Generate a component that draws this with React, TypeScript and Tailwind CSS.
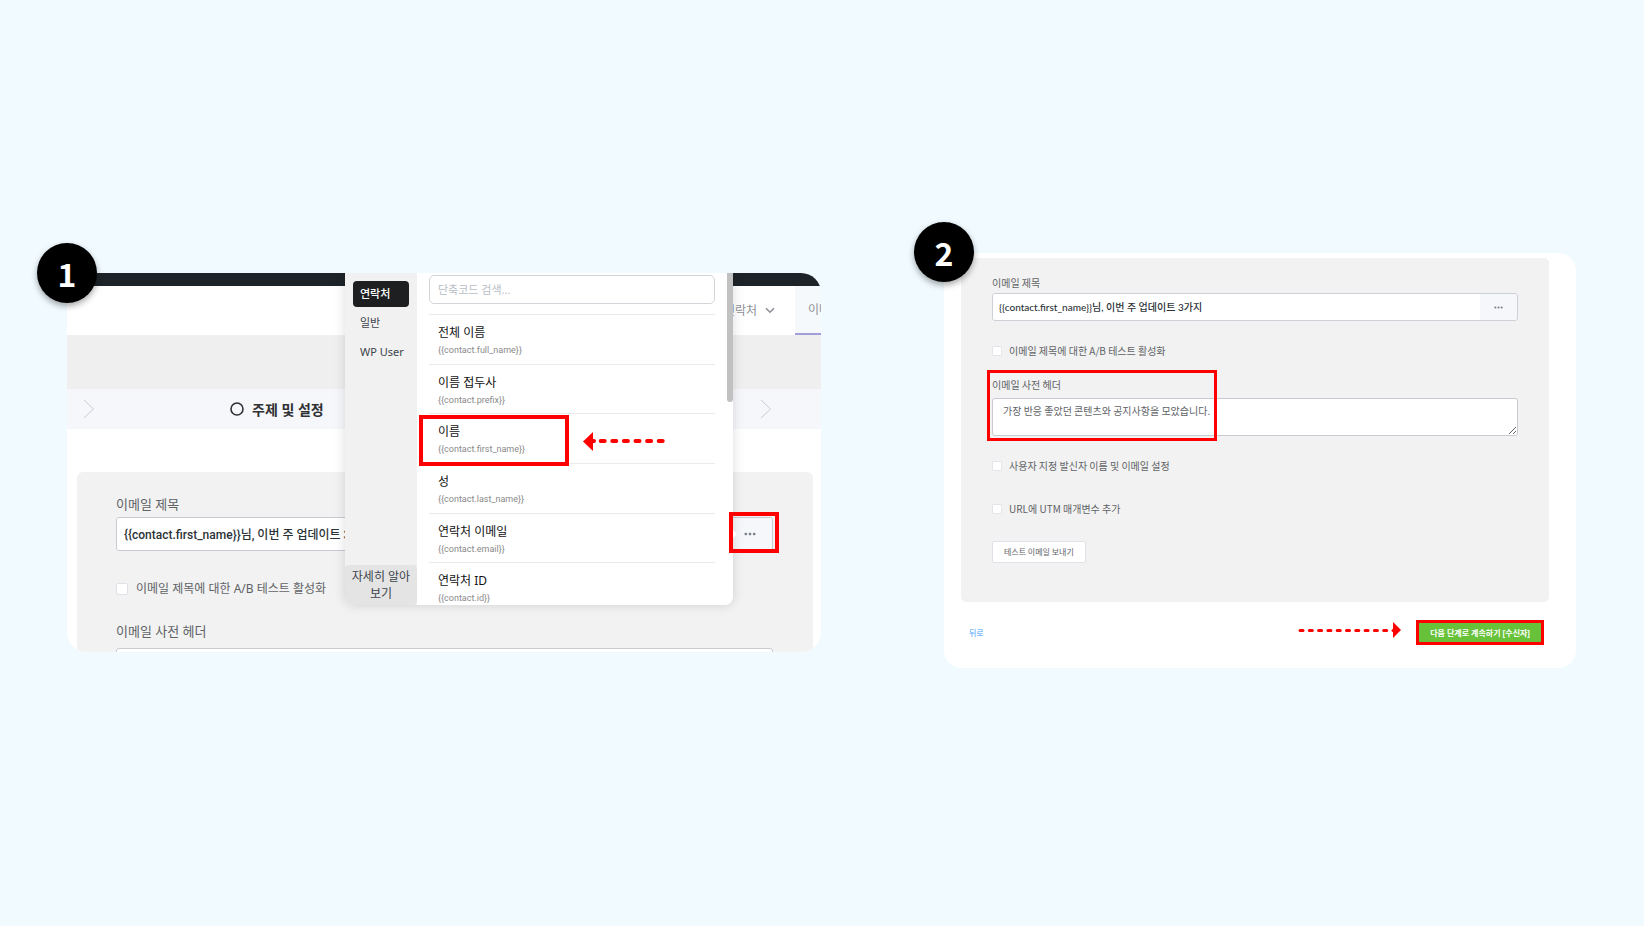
import { useState } from 'react'

const SUBJECT = '{{contact.first_name}}님, 이번 주 업데이트 3가지'

const shortcodes = [
  { title: '전체 이름', code: '{{contact.full_name}}' },
  { title: '이름 접두사', code: '{{contact.prefix}}' },
  { title: '이름', code: '{{contact.first_name}}' },
  { title: '성', code: '{{contact.last_name}}' },
  { title: '연락처 이메일', code: '{{contact.email}}' },
  { title: '연락처 ID', code: '{{contact.id}}' },
]

function StepBadge({ n, className }: { n: number; className: string }) {
  return (
    <div
      className={`absolute flex h-[60px] w-[60px] items-center justify-center rounded-full bg-black font-['Noto_Sans_CJK_KR',sans-serif] text-[32px] leading-none font-bold text-white shadow-[0_3px_6px_rgba(0,0,0,0.35)] ${className}`}
    >
      {n}
    </div>
  )
}

function StepArrow() {
  return (
    <svg width="12" height="20" viewBox="0 0 12 20" fill="none" stroke="#c8cbd2">
      <path d="M1 1l9.5 9L1 19" />
    </svg>
  )
}

function Dots({ className }: { className: string }) {
  return (
    <svg className={className} viewBox="0 0 12 4" fill="#7d8189">
      <rect x="0.5" y="0.7" width="2.6" height="2.6" rx="1" />
      <rect x="4.7" y="0.7" width="2.6" height="2.6" rx="1" />
      <rect x="8.9" y="0.7" width="2.6" height="2.6" rx="1" />
    </svg>
  )
}

function ShortcodePopover() {
  const [query, setQuery] = useState('')

  return (
    <div className="absolute top-0 left-[278px] h-[332px] w-[388px]">
      <div className="flex h-full overflow-hidden rounded-b-lg bg-white shadow-[0_0_12px_rgba(0,0,0,0.14)]">
        <div className="flex w-[72px] flex-col justify-between bg-[#f1f1f1] text-[#3c434a]">
          <div className="flex flex-col gap-[3px] px-2 pt-2 text-[11px]">
            <button className="h-[26px] rounded bg-[#1d1f21] pl-[7px] text-left font-medium text-white">연락처</button>
            <button className="h-[26px] pl-[7px] text-left">일반</button>
            <button className="h-[26px] pl-[7px] text-left whitespace-nowrap">WP User</button>
          </div>
          <button className="h-10 rounded bg-[#e4e4e4] px-1 text-center text-[12px] leading-[17px]">자세히 알아보기</button>
        </div>
        <div className="flex-1 pt-[2px] pr-[18px] pl-3">
          <input
            aria-label="단축코드 검색"
            placeholder="단축코드 검색..."
            value={query}
            onChange={e => setQuery(e.target.value)}
            className="mb-[10px] block h-[29px] w-full rounded-[5px] border border-[#d3d5da] px-2 text-[11px] placeholder:text-[#b9bdc5]"
          />
          <ul className="grid h-[298px] grid-rows-6">
            {shortcodes
              .filter(s => s.title.includes(query))
              .map(s => (
                <li key={s.code} className="border-t border-[#ebebeb] pt-[9px] pl-[9px]">
                  <div className="text-[12px] leading-[18px] text-[#111]">{s.title}</div>
                  <div className="font-['Roboto',sans-serif] text-[9px] leading-4 text-[#8a8a8a]">{s.code}</div>
                </li>
              ))}
          </ul>
        </div>
      </div>
      <div className="absolute top-0 right-0 h-[129px] w-[6px] rounded-b-[3px] bg-[#c1c1c1]" />
      <div className="absolute top-[257px] left-full border-y-4 border-l-4 border-y-transparent border-l-white" />
    </div>
  )
}

function SubjectCard() {
  const [subject, setSubject] = useState(SUBJECT)

  return (
    <section className="relative mt-5 h-[379px]">
      <div className="relative h-full overflow-hidden rounded-tr-[20px] rounded-b-[20px] bg-white">
        <div className="h-[13px] bg-[#1d2327]" />
        <nav className="flex h-[49px] justify-end text-[12px] text-[#8d9197]">
          <a href="#contacts" className="flex items-center gap-2 pr-5">
            연락처
            <svg width="10" height="7" viewBox="0 0 10 7" fill="none" stroke="#8d9197" strokeWidth="1.6">
              <path d="M1 1.2l4 4 4-4" />
            </svg>
          </a>
          <a
            href="#emails"
            className="flex w-[26px] items-center overflow-hidden border-b-2 border-[#a39dd8] bg-[#f6f9fc] pl-[13px] whitespace-nowrap"
          >
            이메일
          </a>
        </nav>
        <div className="h-[54px] bg-[#efefef]" />
        <div className="flex h-[40px] items-center bg-[#f5f7fa] pr-[49px] pl-4">
          <StepArrow />
          <div className="ml-[135px] flex items-center gap-2 text-[14px] font-bold text-[#303133]">
            <svg width="14" height="14" viewBox="0 0 14 14" fill="none" stroke="#303133" strokeWidth="1.6">
              <circle cx="7" cy="7" r="6" />
            </svg>
            주제 및 설정
          </div>
          <div className="ml-auto">
            <StepArrow />
          </div>
        </div>
        <div className="mt-[43px] mr-2 ml-[10px] rounded-t-md bg-[#f2f2f2] pt-[22px] pr-10 pl-[39px] text-[13px] leading-5 text-[#606266]">
          <label htmlFor="subject" className="block">이메일 제목</label>
          <div className="mt-[3px] flex h-[34px] overflow-hidden rounded-[3px] border border-[#c8cbd2]">
            <input
              id="subject"
              value={subject}
              onChange={e => setSubject(e.target.value)}
              className="min-w-0 flex-1 bg-white px-[7px] pt-[2px] font-['Roboto','Noto_Sans_CJK_KR',sans-serif] text-[12px] font-medium text-[#2c3338]"
            />
            <button aria-label="단축코드" className="flex w-12 items-center bg-[#f5f7fa] pl-5">
              <Dots className="h-1 w-3" />
            </button>
          </div>
          <label className="mt-[28px] flex items-center gap-2 text-[12px] leading-5">
            <input type="checkbox" className="h-3 w-3 appearance-none rounded-[2px] border border-[#dfe2e8] bg-white" />
            이메일 제목에 대한 A/B 테스트 활성화
          </label>
          <label htmlFor="preheader" className="mt-[22px] block">이메일 사전 헤더</label>
          <textarea id="preheader" className="mt-[7px] block h-16 w-full resize-none rounded-[3px] border border-[#c8cbd2] bg-white" />
        </div>
        <ShortcodePopover />
      </div>

      <div className="absolute top-[142px] left-[352px] h-[51px] w-[150px] border-4 border-[#ff0000]" />
      <svg className="absolute top-[158px] left-[515px]" width="84" height="20" viewBox="0 0 84 20">
        <path d="M1 10.5L11 1v19z" fill="#ff0000" />
        <path d="M18.7 10H81M10 10h2" stroke="#ff0000" strokeWidth="4" strokeLinecap="round" strokeDasharray="4 7.6" />
      </svg>
      <div className="absolute top-[239px] right-[42px] h-[41px] w-[50px] border-4 border-[#ff0000]" />
      <StepBadge n={1} className="-top-[30px] -left-[30px]" />
    </section>
  )
}

function Check({ label }: { label: string }) {
  return (
    <label className="flex items-center gap-[7px]">
      <input type="checkbox" className="h-[10px] w-[10px] appearance-none rounded-[1px] border border-[#e3e5ea] bg-white" />
      {label}
    </label>
  )
}

function PreheaderCard() {
  const [subject, setSubject] = useState(SUBJECT)
  const [preheader, setPreheader] = useState('가장 반응 좋았던 콘텐츠와 공지사항을 모았습니다.')

  return (
    <section className="relative rounded-[18px] bg-white pt-[5px] pb-[23px]">
      <div className="mr-[27px] ml-[17px] h-[344px] rounded-[5px] bg-[#f2f2f2] pt-[17px] pr-[31px] pl-[31px] font-['Noto_Sans_CJK_KR',sans-serif] text-[10px] leading-4 text-[#606266]">
        <label htmlFor="subject2" className="block">이메일 제목</label>
        <div className="mt-[2px] flex h-7 overflow-hidden rounded-[3px] border border-[#cdd0d7]">
          <input
            id="subject2"
            value={subject}
            onChange={e => setSubject(e.target.value)}
            className="min-w-0 flex-1 bg-white px-[6px] font-['Lato','Noto_Sans_CJK_KR',sans-serif] font-medium text-[#2c3338]"
          />
          <button aria-label="단축코드" className="flex w-[37px] items-center justify-center bg-[#f5f7fa]">
            <Dots className="h-[3px] w-[9px]" />
          </button>
        </div>
        <div className="mt-[22px]">
          <Check label="이메일 제목에 대한 A/B 테스트 활성화" />
        </div>
        <div className="relative mt-[18px]">
          <label htmlFor="preheader2" className="block">이메일 사전 헤더</label>
          <textarea
            id="preheader2"
            value={preheader}
            onChange={e => setPreheader(e.target.value)}
            className="mt-[5px] block h-[38px] w-full rounded-[3px] border border-[#c8cbd2] bg-white px-[10px] py-1"
          />
          <div className="pointer-events-none absolute -top-[7px] -left-[5px] h-[71px] w-[230px] border-3 border-[#ff0000]" />
        </div>
        <div className="mt-[22px] flex flex-col gap-[27px]">
          <Check label="사용자 지정 발신자 이름 및 이메일 설정" />
          <Check label="URL에 UTM 매개변수 추가" />
        </div>
        <button className="mt-6 block h-[22px] rounded-[2px] border border-[#dfe2e8] bg-white px-[11px] text-[8px] leading-4">
          테스트 이메일 보내기
        </button>
      </div>
      <div className="mt-[18px] mr-8 ml-[25px] flex items-center text-[8px]">
        <a href="#back" className="text-[#409eff]">뒤로</a>
        <svg className="mr-[14px] mb-[6px] ml-auto" width="104" height="16" viewBox="0 0 104 16">
          <path d="M103 8L95 0v16z" fill="#ff0000" />
          <path d="M2 8.5h94" stroke="#ff0000" strokeWidth="3" strokeLinecap="round" strokeDasharray="3 6.3" />
        </svg>
        <button className="h-[25px] border-3 border-[#ff0000] bg-[#67c23a] px-[11px] font-bold text-white">
          다음 단계로 계속하기 [수신자]
        </button>
      </div>
      <StepBadge n={2} className="-top-[31px] -left-[30px]" />
    </section>
  )
}

export default function App() {
  return (
    <main className="grid min-h-screen grid-cols-[754fr_632fr] items-start gap-[123px] bg-[#f0faff] pt-[253px] pr-[68px] pb-10 pl-[67px] font-['Noto_Sans','Noto_Sans_CJK_KR',sans-serif]">
      <SubjectCard />
      <PreheaderCard />
    </main>
  )
}
